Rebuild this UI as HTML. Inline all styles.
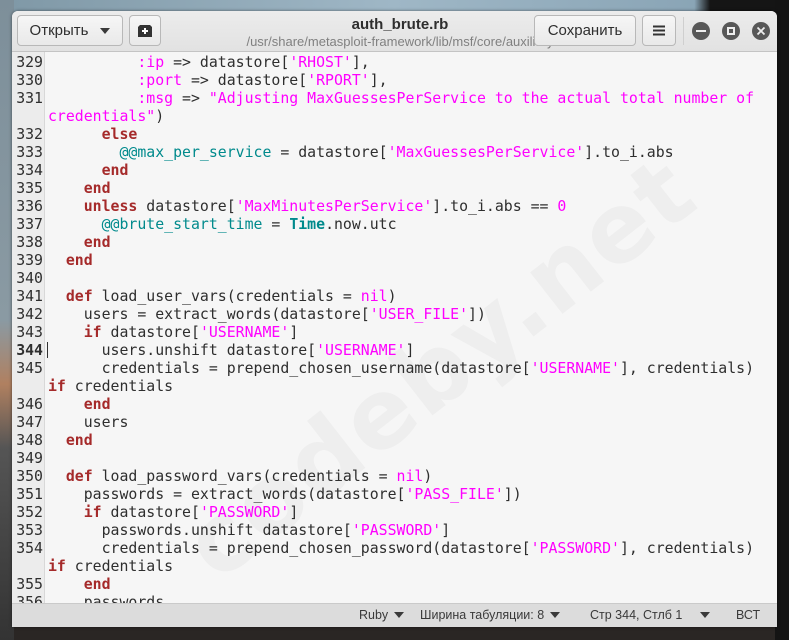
<!DOCTYPE html>
<html><head><meta charset="utf-8"><style>
*{margin:0;padding:0;box-sizing:border-box}
body{width:789px;height:640px;overflow:hidden;position:relative;background:#2a2624;font-family:"Liberation Sans","DejaVu Sans",sans-serif}
.bgtop{position:absolute;left:0;top:0;width:789px;height:14px;background:linear-gradient(90deg,#7f98a6,#9fb7c6 50%,#8aa5b6 88%,#151515 90%)}
.bgleft{position:absolute;left:0;top:0;width:14px;height:640px;background:linear-gradient(180deg,#7d8f9a 0,#8a9aa3 50%,#b08060 60%,#555 70%,#333 100%)}
.bgright{position:absolute;right:0;top:0;width:14px;height:640px;background:#141414}
.win{position:absolute;left:12px;top:11px;width:765px;height:616px;background:#f6f6f6;border-radius:6px 6px 0 0;overflow:hidden;box-shadow:0 0 3px rgba(0,0,0,.5)}
.hdr{position:absolute;left:0;top:0;width:765px;height:41px;background:linear-gradient(#ececec,#e2e2e2);border-bottom:1px solid #c4c4c4}
.btn{position:absolute;top:4px;height:31px;border:1px solid #b8b8b8;border-radius:4px;background:linear-gradient(#f6f6f6,#e9e9e9);font-size:15px;color:#2e2e2e;text-align:center;line-height:29px}
.title{position:absolute;left:230px;width:316px;text-align:center;top:5px;font-weight:bold;font-size:15px;color:#2e2e2e}
.sub{position:absolute;left:180px;width:416px;text-align:center;top:23px;font-size:13px;color:#808080}
.circ{position:absolute;top:11px;width:18px;height:18px;border-radius:50%;background:#585858}
.ed{position:absolute;left:0;top:41px;width:765px;height:551px;overflow:hidden}
.gut{position:absolute;left:0;top:0;width:33px;height:551px;background:#ececec;border-right:1px solid #d8d8d8}
.rows{position:absolute;left:0;top:1px;width:765px;font-family:"DejaVu Sans Mono","Liberation Mono",monospace;font-size:14.85px;line-height:18px;color:#2e2e2e}
.r{position:relative;height:18px}
.n{position:absolute;left:0;width:31px;text-align:right;color:#2e2e2e}
.c{position:absolute;left:36px;white-space:pre}
.k{color:#a52a2a;font-weight:bold}
.s{color:#ff00ff}
.t{color:#008a8c}
.tb{color:#008a8c;font-weight:bold}
.wm{position:absolute;left:120px;top:260px;font-size:96px;font-weight:bold;color:#eeeeee;transform:rotate(-38deg);font-family:"DejaVu Sans",sans-serif;letter-spacing:2px;white-space:nowrap}
.st{position:absolute;left:0;top:592px;width:765px;height:24px;background:#dcdcdc;border-top:1px solid #cacaca;font-size:12.5px;color:#3a3a3a}
.st span{position:absolute;top:4px}
.tri{display:inline-block;width:0;height:0;border-left:5px solid transparent;border-right:5px solid transparent;border-top:6px solid #3a3a3a;vertical-align:middle;margin-left:6px}
</style></head><body>
<div class="bgtop"></div><div class="bgleft"></div><div class="bgright"></div>
<div class="win">
<div class="hdr">
 <div class="btn" style="left:5px;width:106px">Открыть<span class="tri" style="margin-left:12px"></span></div>
 <div class="btn" style="left:117px;width:32px"><svg width="14" height="12" viewBox="0 0 14 12" style="margin-top:9px"><path d="M2 0h10l2 2v10H0V2z" fill="#333"/><path d="M7 3v6M4 6h6" stroke="#fff" stroke-width="2"/></svg></div>
 <div class="title">auth_brute.rb</div>
 <div class="sub">/usr/share/metasploit-framework/lib/msf/core/auxiliary</div>
 <div class="btn" style="left:522px;width:102px">Сохранить</div>
 <div class="btn" style="left:630px;width:34px"><svg width="12" height="11" viewBox="0 0 12 11" style="margin-top:9px"><path d="M0 1.5h12M0 5.5h12M0 9.5h12" stroke="#333" stroke-width="2"/></svg></div>
 <div style="position:absolute;left:671px;top:6px;width:1px;height:28px;background:#cfcfcf"></div>
 <div class="circ" style="left:680px"><div style="position:absolute;left:4px;top:8px;width:10px;height:2px;background:#eee"></div></div>
 <div class="circ" style="left:710px"><div style="position:absolute;left:5px;top:5px;width:8px;height:8px;border:2px solid #eee"></div></div>
 <div class="circ" style="left:740px"><svg width="18" height="18" style="position:absolute;left:0;top:0"><path d="M5.5 5.5l7 7M12.5 5.5l-7 7" stroke="#eee" stroke-width="1.8"/></svg></div>
</div>
<div class="ed">
<div class="gut"></div>
<div class="wm">codeby.net</div>
<div class="rows">
<div class="r"><span class="n">329</span><span class="c">          <span class="s">:ip</span> =&gt; datastore[<span class="s">'RHOST'</span>],</span></div>
<div class="r"><span class="n">330</span><span class="c">          <span class="s">:port</span> =&gt; datastore[<span class="s">'RPORT'</span>],</span></div>
<div class="r"><span class="n">331</span><span class="c">          <span class="s">:msg</span> =&gt; <span class="s">"Adjusting MaxGuessesPerService to the actual total number of</span></span></div>
<div class="r"><span class="c"><span class="s">credentials"</span>)</span></div>
<div class="r"><span class="n">332</span><span class="c">      <span class="k">else</span></span></div>
<div class="r"><span class="n">333</span><span class="c">        <span class="t">@@max_per_service</span> = datastore[<span class="s">'MaxGuessesPerService'</span>].to_i.abs</span></div>
<div class="r"><span class="n">334</span><span class="c">      <span class="k">end</span></span></div>
<div class="r"><span class="n">335</span><span class="c">    <span class="k">end</span></span></div>
<div class="r"><span class="n">336</span><span class="c">    <span class="k">unless</span> datastore[<span class="s">'MaxMinutesPerService'</span>].to_i.abs == <span class="s">0</span></span></div>
<div class="r"><span class="n">337</span><span class="c">      <span class="t">@@brute_start_time</span> = <span class="tb">Time</span>.now.utc</span></div>
<div class="r"><span class="n">338</span><span class="c">    <span class="k">end</span></span></div>
<div class="r"><span class="n">339</span><span class="c">  <span class="k">end</span></span></div>
<div class="r"><span class="n">340</span></div>
<div class="r"><span class="n">341</span><span class="c">  <span class="k">def</span> load_user_vars(credentials = <span class="s">nil</span>)</span></div>
<div class="r"><span class="n">342</span><span class="c">    users = extract_words(datastore[<span class="s">'USER_FILE'</span>])</span></div>
<div class="r"><span class="n">343</span><span class="c">    <span class="k">if</span> datastore[<span class="s">'USERNAME'</span>]</span></div>
<div class="r"><span class="n" style="font-weight:bold">344</span><span style="position:absolute;left:35px;top:1px;width:1px;height:16px;background:#333"></span><span class="c">      users.unshift datastore[<span class="s">'USERNAME'</span>]</span></div>
<div class="r"><span class="n">345</span><span class="c">      credentials = prepend_chosen_username(datastore[<span class="s">'USERNAME'</span>], credentials)</span></div>
<div class="r"><span class="c"><span class="k">if</span> credentials</span></div>
<div class="r"><span class="n">346</span><span class="c">    <span class="k">end</span></span></div>
<div class="r"><span class="n">347</span><span class="c">    users</span></div>
<div class="r"><span class="n">348</span><span class="c">  <span class="k">end</span></span></div>
<div class="r"><span class="n">349</span></div>
<div class="r"><span class="n">350</span><span class="c">  <span class="k">def</span> load_password_vars(credentials = <span class="s">nil</span>)</span></div>
<div class="r"><span class="n">351</span><span class="c">    passwords = extract_words(datastore[<span class="s">'PASS_FILE'</span>])</span></div>
<div class="r"><span class="n">352</span><span class="c">    <span class="k">if</span> datastore[<span class="s">'PASSWORD'</span>]</span></div>
<div class="r"><span class="n">353</span><span class="c">      passwords.unshift datastore[<span class="s">'PASSWORD'</span>]</span></div>
<div class="r"><span class="n">354</span><span class="c">      credentials = prepend_chosen_password(datastore[<span class="s">'PASSWORD'</span>], credentials)</span></div>
<div class="r"><span class="c"><span class="k">if</span> credentials</span></div>
<div class="r"><span class="n">355</span><span class="c">    <span class="k">end</span></span></div>
<div class="r"><span class="n">356</span><span class="c">    passwords</span></div>
</div>
</div>
<div class="st">
 <span style="left:347px">Ruby<span class="tri"></span></span>
 <span style="left:408px">Ширина табуляции: 8<span class="tri"></span></span>
 <span style="left:578px">Стр 344, Стлб 1</span>
 <span style="left:688px"><span class="tri" style="margin-left:0"></span></span>
 <span style="left:724px">ВСТ</span>
</div>
</div>
</body></html>
